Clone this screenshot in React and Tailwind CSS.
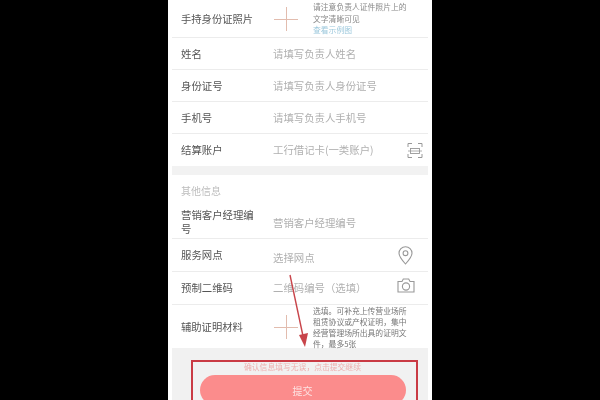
const FONT = { fontFamily: '"Noto Sans CJK SC", "Noto Sans", sans-serif' };

function Plus() {
  return (
    <div className="relative w-[24px] h-[24px] shrink-0">
      <div className="absolute left-0 right-0 top-[12px] h-px bg-[#e2bcae]" />
      <div className="absolute top-0 bottom-0 left-[12px] w-px bg-[#e2bcae]" />
    </div>
  );
}

function Row({ label, hint, icon, className = "h-8", hintClass = "", iconClass = "mr-[9px]" }) {
  return (
    <div className={`flex items-center mx-1 border-b border-[#ececec] ${className}`}>
      <div className="w-[101px] shrink-0 pl-[9px] pr-[14px] text-[10.4px] leading-[14px] text-[#555]">{label}</div>
      <div className={`flex-1 text-[10.4px] text-[#b0b0b0] ${hintClass}`}>{hint}</div>
      {icon && <div className={`w-[27px] flex justify-center text-[#999] ${iconClass}`}>{icon}</div>}
    </div>
  );
}

function ScanIcon() {
  return (
    <svg width="16" height="17" viewBox="0 0 16 17" fill="none" stroke="currentColor" strokeWidth="1">
      <path d="M1 5V1.5h4M11 1.5h4V5M1 12v3.5h4M11 15.5h4V12" />
      <rect x="3.5" y="6.5" width="9" height="5" strokeWidth="0.9" />
      <path d="M1 9h14" strokeWidth="0.8" />
    </svg>
  );
}

function PinIcon() {
  return (
    <svg width="15" height="19" viewBox="0 0 15 19" fill="none" stroke="currentColor" strokeWidth="1.1">
      <path d="M7.5 18C3.5 13.5 1 10.5 1 7.2a6.5 6.5 0 0 1 13 0c0 3.3-2.5 6.3-6.5 10.8z" />
      <circle cx="7.5" cy="7.2" r="2.4" />
    </svg>
  );
}

function CameraIcon() {
  return (
    <svg width="18" height="15" viewBox="0 0 18 15" fill="none" stroke="currentColor" strokeWidth="1.1">
      <path d="M1 3.5h4L6.3 1h5.4L13 3.5h4V14H1z" />
      <circle cx="9" cy="8.5" r="3.6" />
    </svg>
  );
}

export default function App() {
  return (
    <div className="w-[600px] h-[400px] bg-black flex justify-center overflow-hidden" style={FONT}>
      <div className="relative w-[264px] h-[400px] bg-white overflow-hidden blur-[0.6px]">
        {/* upload row */}
        <div className="flex items-center mx-1 h-[38px] border-b border-[#ececec]">
          <div className="w-[101px] pl-[9px] text-[10.3px] text-[#555]">手持身份证照片</div>
          <div className="w-[40px] pl-px"><Plus /></div>
          <div className="text-[7.8px] leading-[11.5px] text-[#888]">
            <div>请注意负责人证件照片上的</div>
            <div>文字清晰可见</div>
            <div className="text-[#9cc8dc]">查看示例图</div>
          </div>
        </div>

        <Row label="姓名" hint="请填写负责人姓名" />
        <Row label="身份证号" hint="请填写负责人身份证号" />
        <Row label="手机号" hint="请填写负责人手机号" />
        <Row
          label="结算账户"
          hint="工行借记卡(一类账户)"
          icon={<ScanIcon />}
          className="h-[32px] border-b-0"
          iconClass="mr-0"
        />

        <div className="h-[9px] mx-1 bg-[#f2f2f2]" />

        <div className="h-[30px] mx-1 pl-[9px] flex items-center text-[10px] text-[#bdbdbd]">其他信息</div>

        <Row label="营销客户经理编号" hint="营销客户经理编号" className="h-[34px]" hintClass="mt-[2px]" />
        <Row label="服务网点" hint="选择网点" icon={<PinIcon />} className="h-[33px]" hintClass="mt-[5px]" />
        <Row
          label="预制二维码"
          hint="二维码编号（选填）"
          icon={<CameraIcon />}
          className="h-[33px]"
          iconClass="mr-[9px] -mt-[5px]"
        />

        {/* second upload row */}
        <div className="flex items-center mx-1 h-[43px]">
          <div className="w-[101px] pl-[9px] text-[10.3px] text-[#555]">辅助证明材料</div>
          <div className="w-[40px] pl-px"><Plus /></div>
          <div className="w-[100px] text-[7.8px] leading-[11px] text-[#777]">
            选填。可补充上传营业场所租赁协议或产权证明，集中经营管理场所出具的证明文件，最多5张
          </div>
        </div>

        {/* submit area */}
        <div className="mx-1 h-[52px] bg-[#f1f1f1] flex flex-col items-center pt-[14px] pl-[5px]">
          <div className="text-[7.8px] leading-[10px] text-[#eeb0b0]">确认信息填写无误，点击提交继续</div>
          <div className="mt-[3px] w-[206px] h-[30px] shrink-0 rounded-full bg-[#fb8c8c] flex items-center justify-center text-[10px] text-[#fde3e3]">
            提交
          </div>
        </div>

        {/* annotation box */}
        <div className="absolute left-[23px] top-[360px] w-[227px] h-[50px] border-2 border-[#c93a44]" />

        {/* annotation arrow */}
        <svg className="absolute left-[110px] top-[270px]" width="40" height="85" viewBox="0 0 40 85" fill="none">
          <path d="M12 5L25 66" stroke="#c8444a" strokeWidth="1.4" />
          <path d="M27 77L21 65L30 63z" fill="#c8444a" />
        </svg>
      </div>
    </div>
  );
}
